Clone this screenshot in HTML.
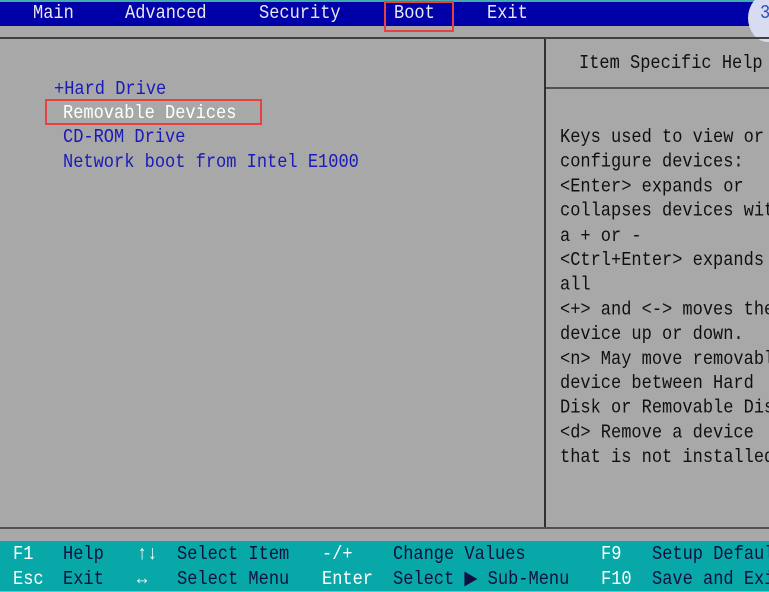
<!DOCTYPE html>
<html><head><style>
body{margin:0;width:769px;height:591px;overflow:hidden;background:#a8a8a8;position:relative;font-family:"Liberation Mono",monospace;font-size:17px;}
.t{position:absolute;white-space:pre;line-height:20px;transform:scaleY(1.15);transform-origin:left top;}
.top{position:absolute;left:0;top:0;width:769px;height:26px;background:#0000a8;border-top:2px solid #4aa;box-sizing:border-box;}
.w{color:#e8e8f0}
.b{color:#1a1ab8}
.k{color:#101010}
.y{color:#fff}
.n{color:#101040}
</style></head><body>
<div class="top"></div>
<div class="t w" style="left:33px;top:3px">Main</div>
<div class="t w" style="left:125px;top:3px">Advanced</div>
<div class="t w" style="left:259px;top:3px">Security</div>
<div class="t w" style="left:394px;top:3px">Boot</div>
<div class="t w" style="left:487px;top:3px">Exit</div>
<div style="position:absolute;left:384px;top:1px;width:70px;height:31px;border:2px solid #e84040;box-sizing:border-box"></div>
<div style="position:absolute;left:748px;top:-6px;width:40px;height:48px;border-radius:50%;background:#d8dcf0"></div>
<div class="t" style="left:760px;top:3px;color:#3050c0">3</div>
<div style="position:absolute;left:0;top:37px;width:769px;height:2px;background:#404040"></div>
<div style="position:absolute;left:544px;top:39px;width:2px;height:489px;background:#303030"></div>
<div style="position:absolute;left:546px;top:87px;width:223px;height:2px;background:#505050"></div>
<div style="position:absolute;left:0;top:527px;width:769px;height:2px;background:#505050"></div>
<div class="t k" style="left:579px;top:53px">Item Specific Help</div>
<div class="t b" style="left:54px;top:79px">+Hard Drive</div>
<div class="t y" style="left:63px;top:103px">Removable Devices</div>
<div style="position:absolute;left:45px;top:99px;width:217px;height:26px;border:2px solid #e84040;box-sizing:border-box"></div>
<div class="t b" style="left:63px;top:127px">CD-ROM Drive</div>
<div class="t b" style="left:63px;top:152px">Network boot from Intel E1000</div>
<div class="t k" style="left:560px;top:126px;line-height:21.4px">Keys used to view or
configure devices:
&lt;Enter&gt; expands or
collapses devices with
a + or -
&lt;Ctrl+Enter&gt; expands
all
&lt;+&gt; and &lt;-&gt; moves the
device up or down.
&lt;n&gt; May move removable
device between Hard
Disk or Removable Disk
&lt;d&gt; Remove a device
that is not installed</div>
<div style="position:absolute;left:0;top:541px;width:769px;height:50px;background:#08a8a8"></div>
<div class="t y" style="left:13px;top:544px">F1</div>
<div class="t n" style="left:63px;top:544px">Help</div>
<div class="t y" style="left:137px;top:544px">↑↓</div>
<div class="t n" style="left:177px;top:544px">Select Item</div>
<div class="t y" style="left:322px;top:544px">-/+</div>
<div class="t n" style="left:393px;top:544px">Change Values</div>
<div class="t y" style="left:601px;top:544px">F9</div>
<div class="t n" style="left:652px;top:544px">Setup Defaults</div>
<div class="t y" style="left:13px;top:569px">Esc</div>
<div class="t n" style="left:63px;top:569px">Exit</div>
<div class="t y" style="left:137px;top:569px">↔</div>
<div class="t n" style="left:177px;top:569px">Select Menu</div>
<div class="t y" style="left:322px;top:569px">Enter</div>
<div class="t n" style="left:393px;top:569px">Select ▶ Sub-Menu</div>
<div class="t y" style="left:601px;top:569px">F10</div>
<div class="t n" style="left:652px;top:569px">Save and Exit</div>
</body></html>
